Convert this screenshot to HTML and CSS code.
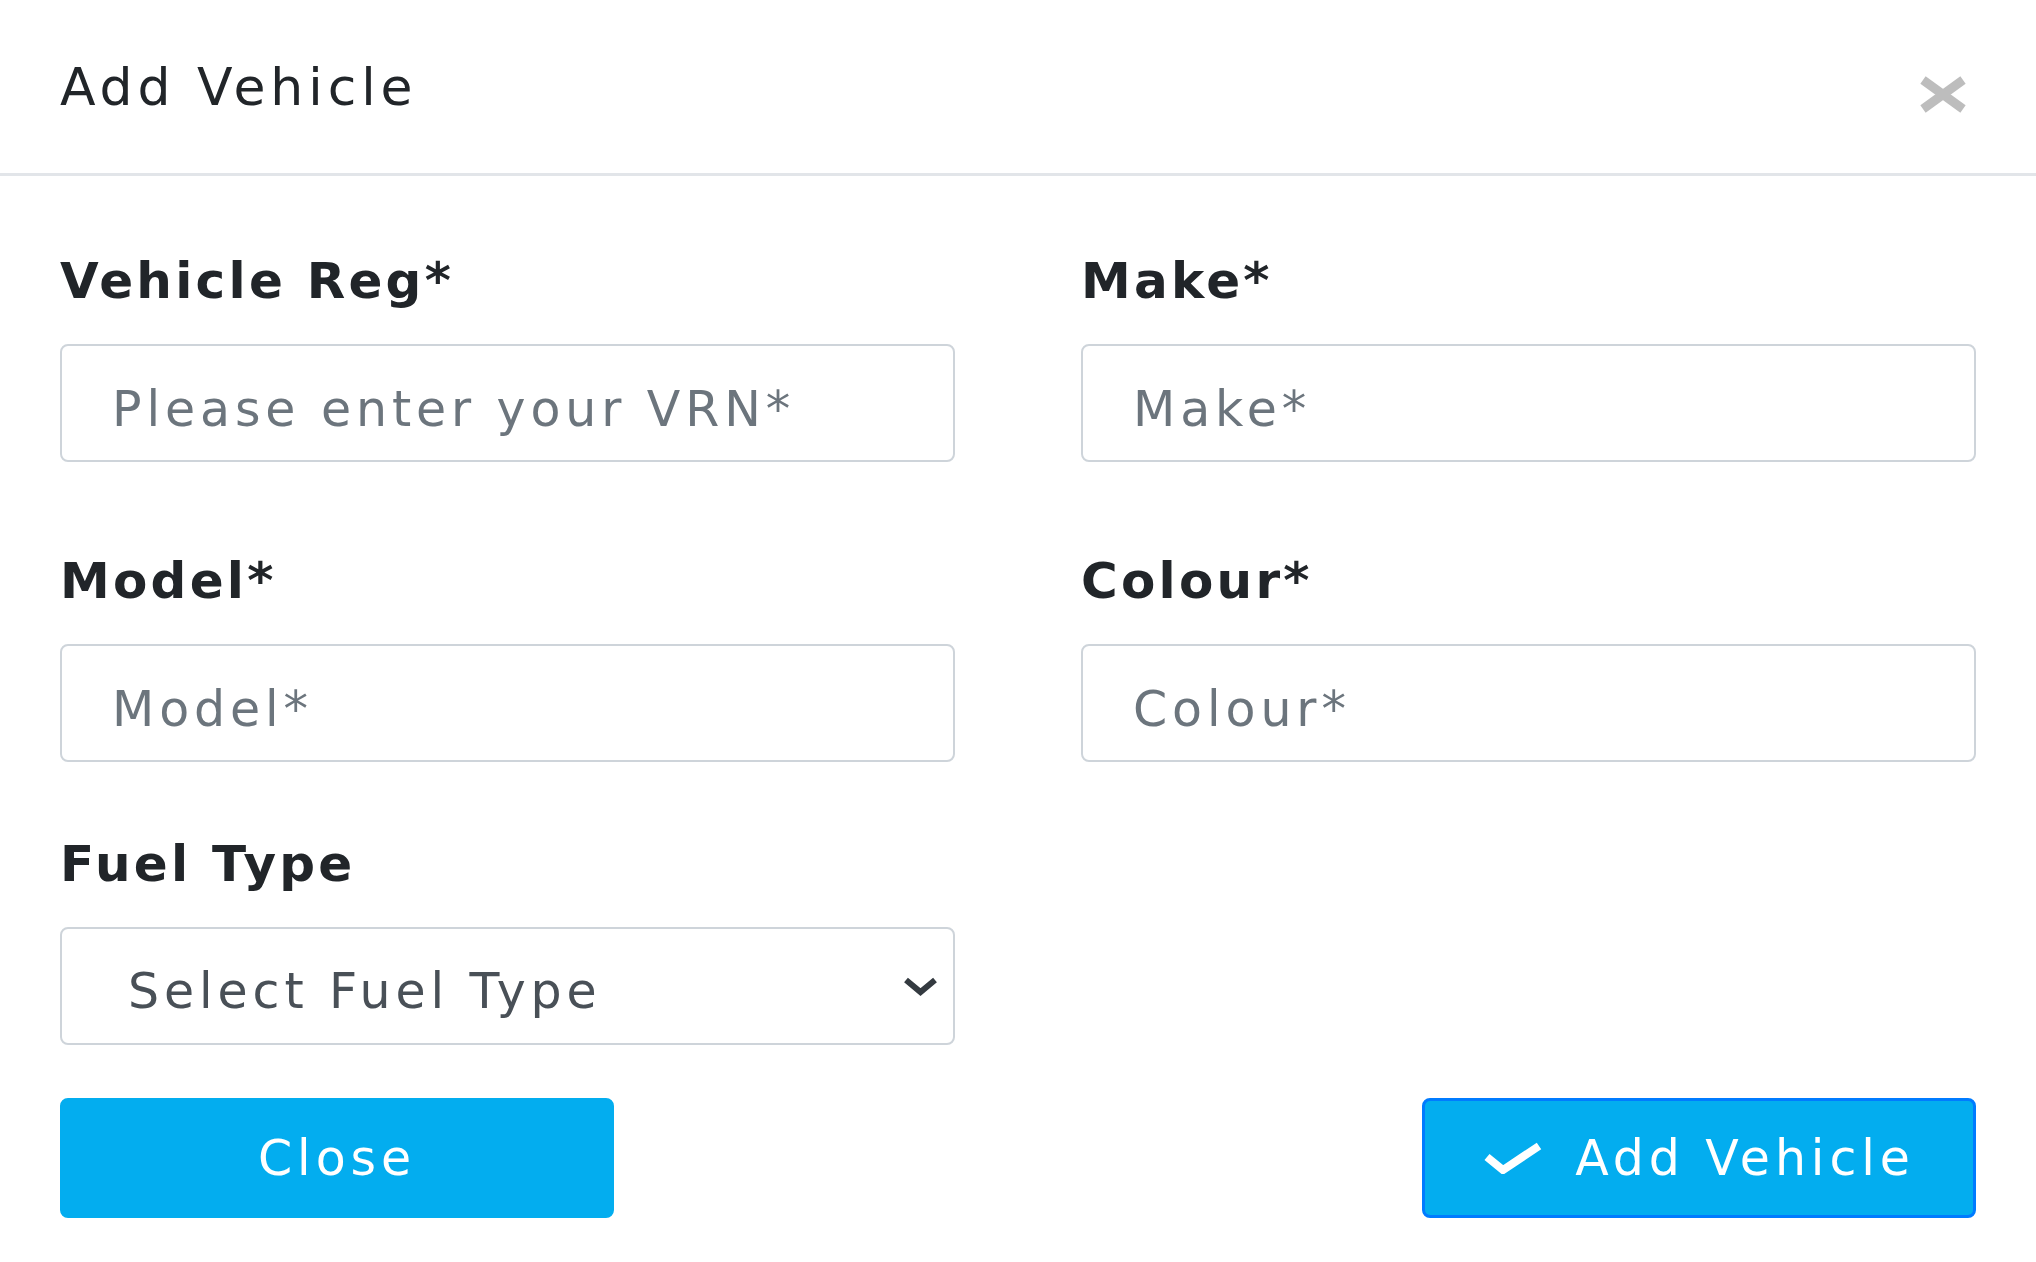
FILE: index.html
```html
<!DOCTYPE html>
<html lang="en">
<head>
    <meta charset="UTF-8">
    <meta name="viewport" content="width=device-width, initial-scale=1.0">
    <title>Add Vehicle</title>
    <link rel="stylesheet" href="styles.css">
</head>
<body>
    <div class="modal-content">
        <div class="modal-header">
            <h5 class="modal-title">Add Vehicle</h5>
            <button type="button" class="close" aria-label="Close">
                <svg viewBox="0 0 50 37" aria-hidden="true">
                    <path d="M5 4 L45 33 M45 4 L5 33" />
                </svg>
            </button>
        </div>

        <form class="modal-body" id="vehicleForm">
            <div class="form-row">
                <div class="form-group">
                    <label for="vrn">Vehicle Reg*</label>
                    <input type="text" id="vrn" class="form-control" placeholder="Please enter your VRN*">
                </div>
                <div class="form-group">
                    <label for="make">Make*</label>
                    <input type="text" id="make" class="form-control" placeholder="Make*">
                </div>
            </div>

            <div class="form-row row-tight">
                <div class="form-group">
                    <label for="model">Model*</label>
                    <input type="text" id="model" class="form-control" placeholder="Model*">
                </div>
                <div class="form-group">
                    <label for="colour">Colour*</label>
                    <input type="text" id="colour" class="form-control" placeholder="Colour*">
                </div>
            </div>

            <div class="form-row row-last">
                <div class="form-group">
                    <label for="fuel">Fuel Type</label>
                    <div class="select-wrap">
                        <select id="fuel" class="form-control custom-select">
                            <option value="">Select Fuel Type</option>
                            <option value="Petrol">Petrol</option>
                            <option value="Diesel">Diesel</option>
                            <option value="Electric">Electric</option>
                            <option value="Hybrid">Hybrid</option>
                        </select>
                        <svg class="select-arrow" viewBox="0 0 37 19" aria-hidden="true">
                            <path d="M4 3 L18.5 15 L33 3" />
                        </svg>
                    </div>
                </div>
            </div>
        </form>

        <div class="modal-footer">
            <button type="button" class="btn btn-info">Close</button>
            <button type="submit" form="vehicleForm" class="btn btn-info btn-submit">
                <svg class="btn-check" viewBox="0 0 60 32" aria-hidden="true">
                    <path d="M4 15 L20 28 L56 4" />
                </svg>
                <span>Add Vehicle</span>
            </button>
        </div>
    </div>
</body>
</html>
```

FILE: styles.css
```css
body { margin: 0; background-color: #fff; color: #212529; font-family: "DejaVu Sans", Verdana, sans-serif; }

.modal-header { display: flex; justify-content: space-between; align-items: flex-start; padding: 57px 68px 55px 60px; border-bottom: 3px solid #e2e5e9; }
.modal-title { margin: 0; font-size: 52px; font-weight: normal; line-height: 61px; letter-spacing: 0.095em; color: #212529; }
.close { margin-top: 19px; padding: 0; border: 0; background: none; cursor: pointer; line-height: 0; }
.close svg { display: block; width: 50px; height: 37px; }
.close path { fill: none; stroke: #bdbdbd; stroke-width: 9; }

.modal-body { padding: 76px 60px 0; margin: 0; }
.form-row { display: grid; grid-template-columns: 1fr 1fr; column-gap: 126px; margin-bottom: 90px; }
.form-row.row-tight { margin-bottom: 73px; }
.form-row.row-last { margin-bottom: 0; }

label { display: block; margin-bottom: 33px; font-size: 50px; font-weight: bold; line-height: 59px; letter-spacing: 0.065em; color: #212529; }

.form-control { display: block; width: 100%; height: 118px; box-sizing: border-box; padding: 35px 50px 23px; border: 2px solid #ced4da; border-radius: 8px; background-color: #fff; font-family: inherit; font-size: 49px; line-height: 56px; letter-spacing: 0.1em; color: #495057; outline: none; }
.form-control::placeholder { color: #6c757d; opacity: 1; }

.select-wrap { position: relative; }
.custom-select { appearance: none; -webkit-appearance: none; padding-left: 66px; padding-right: 80px; }
.select-arrow { position: absolute; right: 16px; top: 50px; width: 37px; height: 19px; pointer-events: none; }
.select-arrow path { fill: none; stroke: #343a40; stroke-width: 6; }

.modal-footer { display: flex; justify-content: space-between; padding: 53px 60px 0; }
.btn { display: flex; align-items: center; justify-content: center; gap: 32px; width: 554px; height: 120px; box-sizing: border-box; border: 2px solid #03adef; border-radius: 8px; background-color: #03adef; color: #fff; font-family: inherit; font-size: 49px; letter-spacing: 0.1em; cursor: pointer; }
.btn-submit { border: 3px solid #007bff; }
.btn-check { width: 60px; height: 32px; flex: none; }
.btn-check path { fill: none; stroke: #fff; stroke-width: 8; }
```
